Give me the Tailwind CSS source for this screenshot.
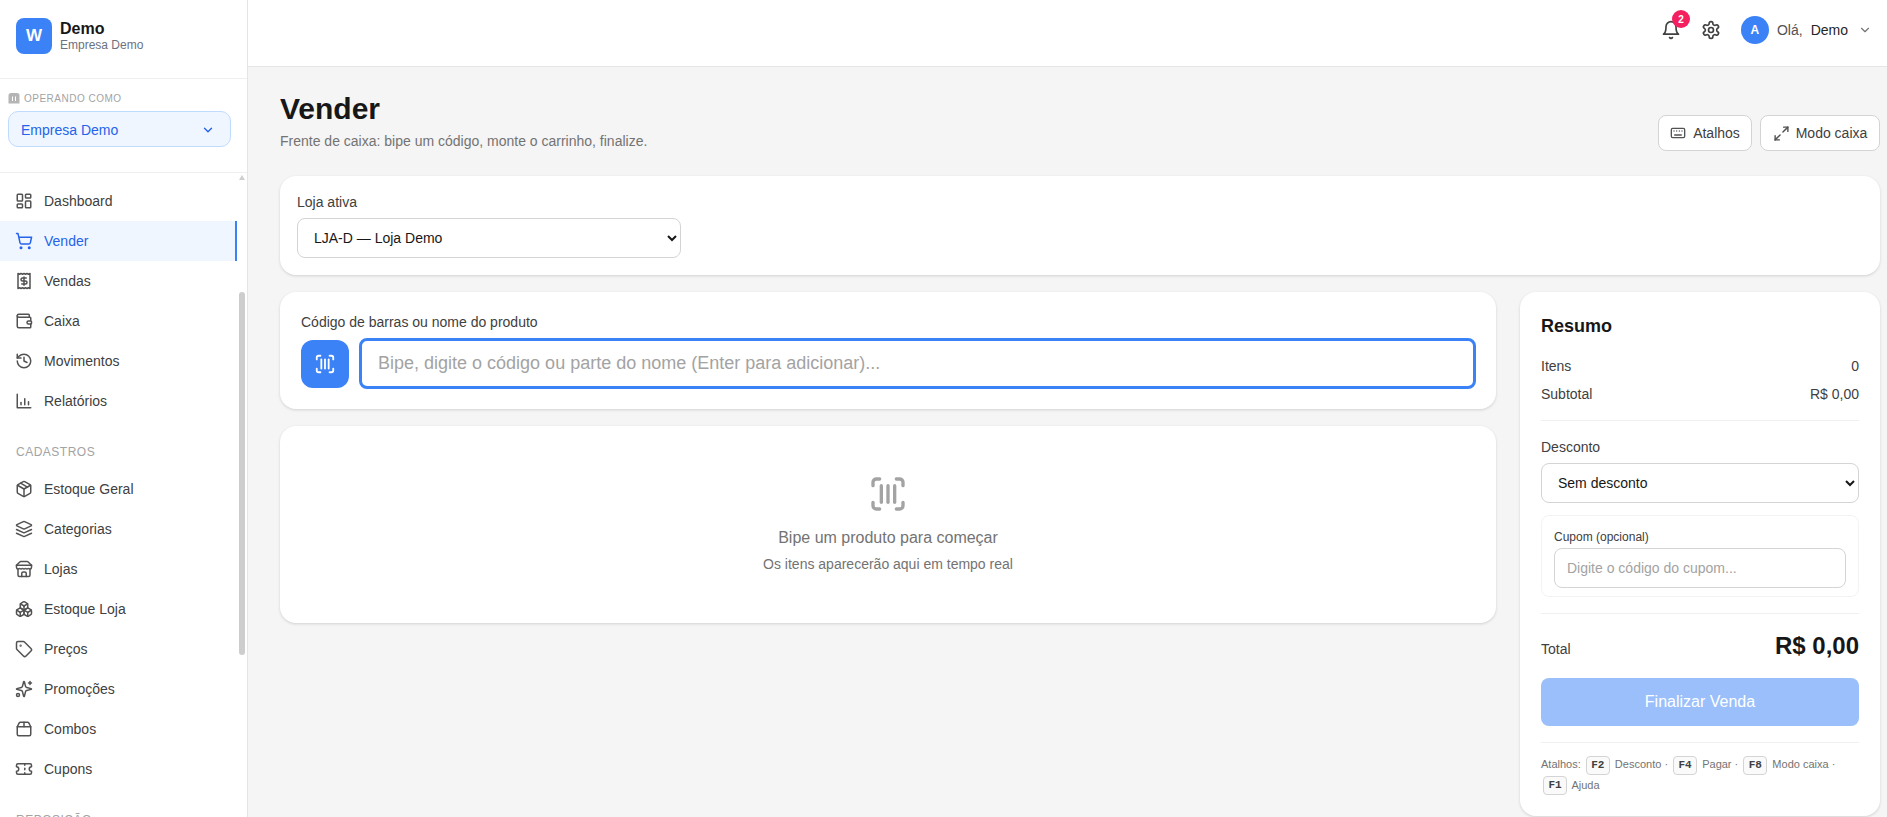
<!DOCTYPE html>
<html>
  <head>
    <meta charset="UTF-8" />
    <script src="https://cdn.jsdelivr.net/npm/@tailwindcss/browser@4"></script>
  </head>
  <body class="bg-[#f5f5f5] font-['Liberation_Sans',Arial,sans-serif] text-[#1f1f1f] overflow-hidden">
    <div class="flex h-[817px] w-[1887px] overflow-hidden">
      <!-- sidebar -->
      <aside class="w-[248px] shrink-0 h-full bg-white border-r border-[#e5e5e5] flex flex-col overflow-hidden">
        <div class="h-[79px] shrink-0 border-b border-[#efefef] flex items-center gap-2 pl-4 pb-[6px]">
          <div class="w-9 h-9 rounded-lg bg-[#3b82f6] text-white font-bold text-[17px] flex items-center justify-center">W</div>
          <div>
            <div class="text-base font-bold leading-[18px] text-[#171717]">Demo</div>
            <div class="text-xs leading-[14px] text-[#6b7280]">Empresa Demo</div>
          </div>
        </div>
        <div class="h-[94px] shrink-0 border-b border-[#efefef] px-2 pt-3">
          <div class="flex items-center gap-1 h-[14px] text-[10px] tracking-[0.5px] text-[#a3a3a3]">
            <svg class="w-3 h-3" viewBox="0 0 24 24" fill="#b5b5b5"><path d="M1 23V7a5 5 0 0 1 5-5h12a5 5 0 0 1 5 5v16z" /><path d="M9 9v9M15 9v9" stroke="#fff" stroke-width="2" /></svg>
            OPERANDO COMO
          </div>
          <div class="mt-[6px] w-[223px] h-9 rounded-[10px] border border-[#bfdbfe] bg-[#eff6ff] flex items-center justify-between pl-3 pr-[15px] pt-[1px] text-sm text-[#2563eb]">
            Empresa Demo
            <svg class="w-[14px] h-[14px]" viewBox="0 0 24 24" fill="none" stroke="currentColor" stroke-width="2.4" stroke-linecap="round" stroke-linejoin="round"><path d="m6 9 6 6 6-6" /></svg>
          </div>
        </div>
        <div class="relative flex-1 overflow-hidden pt-[8px]">
          <!-- scrollbar -->
          <div class="absolute left-[239px] top-[2px] w-0 h-0 border-x-[3px] border-b-[5px] border-x-transparent border-b-[#cfcfcf]"></div>
          <div class="absolute left-[239px] top-[119px] w-[6px] h-[363px] rounded-full bg-[#cdcdcd]"></div>
          <nav class="text-sm text-[#404040] w-[237px]">
            <a class="h-10 flex items-center gap-[11px] pl-[15px]">
              <svg class="w-[18px] h-[18px]" viewBox="0 0 24 24" fill="none" stroke="#525252" stroke-width="2" stroke-linecap="round" stroke-linejoin="round"><rect x="3" y="3" width="7" height="9" rx="1" /><rect x="14" y="3" width="7" height="5" rx="1" /><rect x="14" y="12" width="7" height="9" rx="1" /><rect x="3" y="16" width="7" height="5" rx="1" /></svg>
              Dashboard
            </a>
            <a class="h-10 flex items-center gap-[11px] pl-[15px] bg-[#eff6ff] border-r-2 border-[#3b82f6] text-[#2563eb]">
              <svg class="w-[18px] h-[18px]" viewBox="0 0 24 24" fill="none" stroke="currentColor" stroke-width="2" stroke-linecap="round" stroke-linejoin="round"><circle cx="8" cy="21" r="1" /><circle cx="19" cy="21" r="1" /><path d="M2.05 2.05h2l2.66 12.42a2 2 0 0 0 2 1.58h9.78a2 2 0 0 0 1.95-1.57l1.65-7.43H5.12" /></svg>
              Vender
            </a>
            <a class="h-10 flex items-center gap-[11px] pl-[15px]">
              <svg class="w-[18px] h-[18px]" viewBox="0 0 24 24" fill="none" stroke="#525252" stroke-width="2" stroke-linecap="round" stroke-linejoin="round"><path d="M4 2v20l2-1 2 1 2-1 2 1 2-1 2 1 2-1 2 1V2l-2 1-2-1-2 1-2-1-2 1-2-1-2 1Z" /><path d="M15 8h-5a2 2 0 1 0 0 4h4a2 2 0 1 1 0 4H9" /><path d="M12 17.5v-11" /></svg>
              Vendas
            </a>
            <a class="h-10 flex items-center gap-[11px] pl-[15px]">
              <svg class="w-[18px] h-[18px]" viewBox="0 0 24 24" fill="none" stroke="#525252" stroke-width="2" stroke-linecap="round" stroke-linejoin="round"><path d="M19 7V4a1 1 0 0 0-1-1H5a2 2 0 0 0 0 4h15a1 1 0 0 1 1 1v4h-3a2 2 0 0 0 0 4h3a1 1 0 0 0 1-1v-2a1 1 0 0 0-1-1" /><path d="M3 5v14a2 2 0 0 0 2 2h15a1 1 0 0 0 1-1v-4" /></svg>
              Caixa
            </a>
            <a class="h-10 flex items-center gap-[11px] pl-[15px]">
              <svg class="w-[18px] h-[18px]" viewBox="0 0 24 24" fill="none" stroke="#525252" stroke-width="2" stroke-linecap="round" stroke-linejoin="round"><path d="M3 12a9 9 0 1 0 9-9 9.75 9.75 0 0 0-6.74 2.74L3 8" /><path d="M3 3v5h5" /><path d="M12 7v5l4 2" /></svg>
              Movimentos
            </a>
            <a class="h-10 flex items-center gap-[11px] pl-[15px]">
              <svg class="w-[18px] h-[18px]" viewBox="0 0 24 24" fill="none" stroke="#525252" stroke-width="2" stroke-linecap="round" stroke-linejoin="round"><path d="M3 3v18h18" /><path d="M18 17V13" /><path d="M13 17V9" /><path d="M8 17v-3" /></svg>
              Relatórios
            </a>
            <div class="mt-[20px] mb-[6px] h-[22px] pl-4 flex items-center text-xs font-medium tracking-[0.5px] text-[#a3a3a3]">CADASTROS</div>
            <a class="h-10 flex items-center gap-[11px] pl-[15px]">
              <svg class="w-[18px] h-[18px]" viewBox="0 0 24 24" fill="none" stroke="#525252" stroke-width="2" stroke-linecap="round" stroke-linejoin="round"><path d="M11 21.73a2 2 0 0 0 2 0l7-4A2 2 0 0 0 21 16V8a2 2 0 0 0-1-1.73l-7-4a2 2 0 0 0-2 0l-7 4A2 2 0 0 0 3 8v8a2 2 0 0 0 1 1.73z" /><path d="M12 22V12" /><path d="m3.3 7 8.7 5 8.7-5" /><path d="m7.5 4.27 9 5.15" /></svg>
              Estoque Geral
            </a>
            <a class="h-10 flex items-center gap-[11px] pl-[15px]">
              <svg class="w-[18px] h-[18px]" viewBox="0 0 24 24" fill="none" stroke="#525252" stroke-width="2" stroke-linecap="round" stroke-linejoin="round"><path d="m12.83 2.18a2 2 0 0 0-1.66 0L2.6 6.08a1 1 0 0 0 0 1.83l8.58 3.91a2 2 0 0 0 1.66 0l8.58-3.9a1 1 0 0 0 0-1.83Z" /><path d="m22 17.65-9.17 4.16a2 2 0 0 1-1.66 0L2 17.65" /><path d="m22 12.65-9.17 4.16a2 2 0 0 1-1.66 0L2 12.65" /></svg>
              Categorias
            </a>
            <a class="h-10 flex items-center gap-[11px] pl-[15px]">
              <svg class="w-[18px] h-[18px]" viewBox="0 0 24 24" fill="none" stroke="#525252" stroke-width="2" stroke-linecap="round" stroke-linejoin="round"><path d="m2 7 4.41-4.41A2 2 0 0 1 7.83 2h8.34a2 2 0 0 1 1.42.59L22 7" /><path d="M4 12v8a2 2 0 0 0 2 2h12a2 2 0 0 0 2-2v-8" /><path d="M15 22v-4a2 2 0 0 0-2-2h-2a2 2 0 0 0-2 2v4" /><path d="M2 7h20" /><path d="M22 7v3a2 2 0 0 1-2 2 2.7 2.7 0 0 1-1.59-.63.7.7 0 0 0-.82 0A2.7 2.7 0 0 1 16 12a2.7 2.7 0 0 1-1.59-.63.7.7 0 0 0-.82 0A2.7 2.7 0 0 1 12 12a2.7 2.7 0 0 1-1.59-.63.7.7 0 0 0-.82 0A2.7 2.7 0 0 1 8 12a2.7 2.7 0 0 1-1.59-.63.7.7 0 0 0-.82 0A2.7 2.7 0 0 1 4 12a2 2 0 0 1-2-2V7" /></svg>
              Lojas
            </a>
            <a class="h-10 flex items-center gap-[11px] pl-[15px]">
              <svg class="w-[18px] h-[18px]" viewBox="0 0 24 24" fill="none" stroke="#525252" stroke-width="2" stroke-linecap="round" stroke-linejoin="round"><path d="M2.97 12.92A2 2 0 0 0 2 14.63v3.24a2 2 0 0 0 .97 1.71l3 1.8a2 2 0 0 0 2.06 0L12 19v-5.5l-5-3-4.03 2.42Z" /><path d="m7 16.5-4.74-2.85" /><path d="m7 16.5 5-3" /><path d="M7 16.5v5.17" /><path d="M12 13.5V19l3.97 2.38a2 2 0 0 0 2.06 0l3-1.8a2 2 0 0 0 .97-1.71v-3.24a2 2 0 0 0-.97-1.71L17 10.5l-5 3Z" /><path d="m17 16.5-5-3" /><path d="m17 16.5 4.74-2.85" /><path d="M17 16.5v5.17" /><path d="M7.97 4.42A2 2 0 0 0 7 6.13v4.37l5 3 5-3V6.13a2 2 0 0 0-.97-1.71l-3-1.8a2 2 0 0 0-2.06 0l-3 1.8Z" /><path d="M12 8 7.26 5.15" /><path d="m12 8 4.74-2.85" /><path d="M12 13.5V8" /></svg>
              Estoque Loja
            </a>
            <a class="h-10 flex items-center gap-[11px] pl-[15px]">
              <svg class="w-[18px] h-[18px]" viewBox="0 0 24 24" fill="none" stroke="#525252" stroke-width="2" stroke-linecap="round" stroke-linejoin="round"><path d="M12.586 2.586A2 2 0 0 0 11.172 2H4a2 2 0 0 0-2 2v7.172a2 2 0 0 0 .586 1.414l8.704 8.704a2.426 2.426 0 0 0 3.42 0l6.58-6.58a2.426 2.426 0 0 0 0-3.42z" /><circle cx="7.5" cy="7.5" r=".5" fill="#525252" /></svg>
              Preços
            </a>
            <a class="h-10 flex items-center gap-[11px] pl-[15px]">
              <svg class="w-[18px] h-[18px]" viewBox="0 0 24 24" fill="none" stroke="#525252" stroke-width="2" stroke-linecap="round" stroke-linejoin="round"><path d="M9.937 15.5A2 2 0 0 0 8.5 14.063l-6.135-1.582a.5.5 0 0 1 0-.962L8.5 9.936A2 2 0 0 0 9.937 8.5l1.582-6.135a.5.5 0 0 1 .963 0L14.063 8.5A2 2 0 0 0 15.5 9.937l6.135 1.581a.5.5 0 0 1 0 .964L15.5 14.063a2 2 0 0 0-1.437 1.437l-1.582 6.135a.5.5 0 0 1-.963 0z" /><path d="M20 2v4" /><path d="M22 4h-4" /><circle cx="4" cy="20" r="2" /></svg>
              Promoções
            </a>
            <a class="h-10 flex items-center gap-[11px] pl-[15px]">
              <svg class="w-[18px] h-[18px]" viewBox="0 0 24 24" fill="none" stroke="#525252" stroke-width="2" stroke-linecap="round" stroke-linejoin="round"><path d="M3 9h18v10a2 2 0 0 1-2 2H5a2 2 0 0 1-2-2V9Z" /><path d="m3 9 2.45-4.9A2 2 0 0 1 7.24 3h9.52a2 2 0 0 1 1.8 1.1L21 9" /><path d="M12 3v6" /></svg>
              Combos
            </a>
            <a class="h-10 flex items-center gap-[11px] pl-[15px]">
              <svg class="w-[18px] h-[18px]" viewBox="0 0 24 24" fill="none" stroke="#525252" stroke-width="2" stroke-linecap="round" stroke-linejoin="round"><path d="M2 9a3 3 0 0 1 0 6v2a2 2 0 0 0 2 2h16a2 2 0 0 0 2-2v-2a3 3 0 0 1 0-6V7a2 2 0 0 0-2-2H4a2 2 0 0 0-2 2Z" /><path d="M13 5v2" /><path d="M13 17v2" /><path d="M13 11v2" /></svg>
              Cupons
            </a>
            <div class="mt-[20px] h-[22px] pl-4 flex items-center text-xs font-medium tracking-[0.5px] text-[#a3a3a3]">REPOSIÇÃO</div>
          </nav>
        </div>
      </aside>

      <div class="flex-1 min-w-0 flex flex-col">
        <!-- header -->
        <header class="h-[67px] shrink-0 bg-white border-b border-[#e5e5e5] flex items-center justify-end pr-[15px] pb-[6px]">
          <div class="relative mr-5">
            <svg class="block w-5 h-5" viewBox="0 0 24 24" fill="none" stroke="#404040" stroke-width="2" stroke-linecap="round" stroke-linejoin="round"><path d="M6 8a6 6 0 0 1 12 0c0 7 3 9 3 9H3s3-2 3-9" /><path d="M10.3 21a1.94 1.94 0 0 0 3.4 0" /></svg>
            <span class="absolute -top-[10px] left-[11px] w-[18px] h-[18px] rounded-full bg-[#f31f5f] text-white text-[10px] font-bold flex items-center justify-center">2</span>
          </div>
          <svg class="w-5 h-5 mr-5" viewBox="0 0 24 24" fill="none" stroke="#404040" stroke-width="2" stroke-linecap="round" stroke-linejoin="round"><path d="M12.22 2h-.44a2 2 0 0 0-2 2v.18a2 2 0 0 1-1 1.73l-.43.25a2 2 0 0 1-2 0l-.15-.08a2 2 0 0 0-2.73.73l-.22.38a2 2 0 0 0 .73 2.73l.15.1a2 2 0 0 1 1 1.72v.51a2 2 0 0 1-1 1.74l-.15.09a2 2 0 0 0-.73 2.73l.22.38a2 2 0 0 0 2.73.73l.15-.08a2 2 0 0 1 2 0l.43.25a2 2 0 0 1 1 1.73V20a2 2 0 0 0 2 2h.44a2 2 0 0 0 2-2v-.18a2 2 0 0 1 1-1.73l.43-.25a2 2 0 0 1 2 0l.15.08a2 2 0 0 0 2.73-.73l.22-.39a2 2 0 0 0-.73-2.73l-.15-.08a2 2 0 0 1-1-1.74v-.5a2 2 0 0 1 1-1.74l.15-.09a2 2 0 0 0 .73-2.73l-.22-.38a2 2 0 0 0-2.73-.73l-.15.08a2 2 0 0 1-2 0l-.43-.25a2 2 0 0 1-1-1.73V4a2 2 0 0 0-2-2z" /><circle cx="12" cy="12" r="3" /></svg>
          <div class="w-7 h-7 rounded-full bg-[#3b82f6] text-white text-xs font-bold flex items-center justify-center mr-2">A</div>
          <span class="text-sm text-[#525252] mr-2">Olá,</span>
          <span class="text-sm text-[#262626] mr-[10px]">Demo</span>
          <svg class="w-[14px] h-[14px]" viewBox="0 0 24 24" fill="none" stroke="#737373" stroke-width="2" stroke-linecap="round" stroke-linejoin="round"><path d="m6 9 6 6 6-6" /></svg>
        </header>

        <main class="flex-1 min-h-0 overflow-hidden pl-[32px] pr-[7px] pt-6">
          <div class="flex justify-between h-[60px]">
            <div class="self-start">
              <h1 class="text-[30px] leading-9 font-bold text-[#171717]">Vender</h1>
              <p class="text-sm leading-5 mt-1 text-[#737373]">Frente de caixa: bipe um código, monte o carrinho, finalize.</p>
            </div>
            <div class="flex gap-2 self-end">
              <button class="h-9 w-[94px] rounded-lg border border-[#d4d4d4] bg-white text-sm text-[#404040] flex items-center justify-center gap-[7px]">
                <svg class="w-4 h-4" viewBox="0 0 24 24" fill="none" stroke="#525252" stroke-width="2" stroke-linecap="round" stroke-linejoin="round"><rect x="2" y="5" width="20" height="14" rx="2" /><path d="M6 9h.01M10 9h.01M14 9h.01M18 9h.01M7 15h10" /></svg>
                Atalhos
              </button>
              <button class="h-9 w-[120px] rounded-lg border border-[#d4d4d4] bg-white text-sm text-[#404040] flex items-center justify-center gap-[6px]">
                <svg class="w-[17px] h-[17px]" viewBox="0 0 24 24" fill="none" stroke="#525252" stroke-width="2" stroke-linecap="round" stroke-linejoin="round"><path d="M21 3l-7 7" /><path d="M15 3h6v6" /><path d="M3 21l7-7" /><path d="M9 21H3v-6" /></svg>
                Modo caixa
              </button>
            </div>
          </div>

          <!-- loja ativa -->
          <section class="mt-[25px] h-[99px] rounded-2xl bg-white shadow-[0_1px_3px_rgba(0,0,0,0.15)] px-[17px] pt-4">
            <label class="block text-sm leading-5 text-[#404040]">Loja ativa</label>
            <select class="mt-[6px] block w-[384px] h-10 rounded-lg border border-[#d4d4d4] bg-white pl-3 pr-1 text-sm text-[#171717]">
              <option>LJA-D — Loja Demo</option>
            </select>
          </section>

          <div class="mt-[17px] flex gap-6 items-start">
            <div class="flex-1 min-w-0 flex flex-col gap-[17px]">
              <section class="h-[117px] rounded-2xl bg-white shadow-[0_1px_3px_rgba(0,0,0,0.15)] pl-[21px] pr-5 pt-5">
                <label class="block text-sm leading-5 text-[#404040]">Código de barras ou nome do produto</label>
                <div class="mt-[6px] flex items-center gap-[10px]">
                  <button class="w-12 h-12 rounded-xl bg-[#3b82f6] flex items-center justify-center shrink-0">
                    <svg class="w-[22px] h-[22px]" viewBox="0 0 24 24" fill="none" stroke="#fff" stroke-width="2" stroke-linecap="round" stroke-linejoin="round"><path d="M3 7V5a2 2 0 0 1 2-2h2" /><path d="M17 3h2a2 2 0 0 1 2 2v2" /><path d="M21 17v2a2 2 0 0 1-2 2h-2" /><path d="M7 21H5a2 2 0 0 1-2-2v-2" /><path d="M8 7v10" /><path d="M12 7v10" /><path d="M16 7v10" /></svg>
                  </button>
                  <input class="flex-1 min-w-0 h-[51px] rounded-lg border-[3px] border-[#3b82f6] bg-white px-4 text-[18px] text-[#171717] placeholder:text-[#a3a3a3] outline-none" placeholder="Bipe, digite o código ou parte do nome (Enter para adicionar)..." />
                </div>
              </section>
              <section class="h-[197px] rounded-2xl bg-white shadow-[0_1px_3px_rgba(0,0,0,0.15)] flex flex-col items-center pt-12">
                <svg class="w-10 h-10" viewBox="0 0 24 24" fill="none" stroke="#a3a3a3" stroke-width="2" stroke-linecap="round" stroke-linejoin="round"><path d="M3 7V5a2 2 0 0 1 2-2h2" /><path d="M17 3h2a2 2 0 0 1 2 2v2" /><path d="M21 17v2a2 2 0 0 1-2 2h-2" /><path d="M7 21H5a2 2 0 0 1-2-2v-2" /><path d="M8 7v10" /><path d="M12 7v10" /><path d="M16 7v10" /></svg>
                <p class="mt-3 text-base leading-6 text-[#737373]">Bipe um produto para começar</p>
                <p class="mt-1 text-sm leading-5 text-[#737373]">Os itens aparecerão aqui em tempo real</p>
              </section>
            </div>

            <!-- resumo -->
            <aside class="w-[360px] shrink-0 h-[524px] rounded-2xl bg-white shadow-[0_1px_3px_rgba(0,0,0,0.15)] px-[21px] pt-[22px] text-sm">
              <h2 class="text-[18px] leading-6 font-bold text-[#171717]">Resumo</h2>
              <div class="mt-[18px] flex justify-between leading-5 text-[#404040]"><span>Itens</span><span>0</span></div>
              <div class="mt-2 flex justify-between leading-5 text-[#404040]"><span>Subtotal</span><span>R$ 0,00</span></div>
              <div class="mt-4 border-t border-[#f0f0f0]"></div>
              <label class="block mt-4 leading-5 text-[#404040]">Desconto</label>
              <select class="mt-[6px] block w-full h-10 rounded-lg border border-[#d4d4d4] bg-white pl-3 pr-1 text-sm text-[#171717]">
                <option>Sem desconto</option>
              </select>
              <div class="mt-3 h-[82px] rounded-lg border border-[#f3f3f3] px-3 pt-[13px]">
                <label class="block text-xs leading-4 text-[#404040]">Cupom (opcional)</label>
                <input class="mt-[3px] block w-full h-10 rounded-lg border border-[#d4d4d4] bg-white px-3 text-sm placeholder:text-[#a3a3a3] outline-none" placeholder="Digite o código do cupom..." />
              </div>
              <div class="mt-4 border-t border-[#f0f0f0]"></div>
              <div class="mt-4 flex justify-between items-end h-8">
                <span class="leading-5 text-[#404040] mb-[3px]">Total</span>
                <span class="text-2xl leading-8 font-bold text-[#171717]">R$ 0,00</span>
              </div>
              <button class="mt-4 w-full h-12 rounded-lg bg-[#9abffa] text-white text-base">Finalizar Venda</button>
              <div class="mt-4 border-t border-[#f0f0f0]"></div>
              <div class="mt-[11px] text-[11px] leading-5 text-[#737373]">
                Atalhos:
                <kbd class="inline-flex items-center justify-center align-middle w-6 h-[19px] mx-[2px] rounded border border-[#d4d4d4] bg-[#fafafa] font-bold text-[11px] leading-none text-[#404040]">F2</kbd>
                Desconto ·
                <kbd class="inline-flex items-center justify-center align-middle w-6 h-[19px] mx-[2px] rounded border border-[#d4d4d4] bg-[#fafafa] font-bold text-[11px] leading-none text-[#404040]">F4</kbd>
                Pagar ·
                <kbd class="inline-flex items-center justify-center align-middle w-6 h-[19px] mx-[2px] rounded border border-[#d4d4d4] bg-[#fafafa] font-bold text-[11px] leading-none text-[#404040]">F8</kbd>
                Modo caixa ·
                <kbd class="inline-flex items-center justify-center align-middle w-6 h-[19px] mx-[2px] rounded border border-[#d4d4d4] bg-[#fafafa] font-bold text-[11px] leading-none text-[#404040]">F1</kbd>
                Ajuda
              </div>
            </aside>
          </div>
        </main>
      </div>
    </div>
  </body>
</html>
